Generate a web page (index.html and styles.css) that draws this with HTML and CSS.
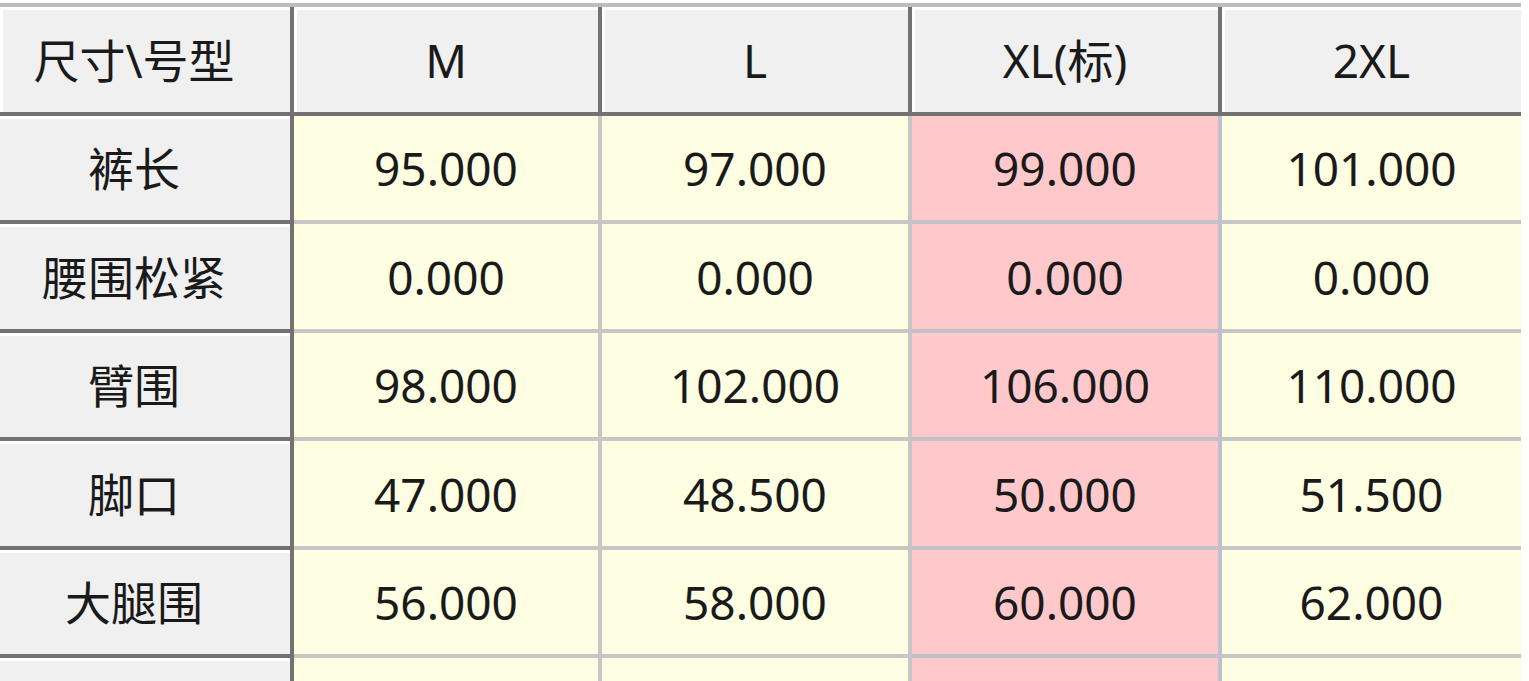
FILE: index.html
```html
<!DOCTYPE html>
<html lang="zh-CN">
<head>
<meta charset="utf-8">
<title>尺寸表</title>
<link rel="stylesheet" href="styles.css">
</head>
<body>
<div class="sheet">
  <table class="grid">
    <colgroup>
      <col class="c-head">
      <col class="c-m">
      <col class="c-l">
      <col class="c-xl">
      <col class="c-2xl">
    </colgroup>
    <thead>
      <tr class="hrow">
        <th class="corner">尺寸\号型</th>
        <th>M</th>
        <th>L</th>
        <th>XL(标)</th>
        <th class="last">2XL</th>
      </tr>
    </thead>
    <tbody>
      <tr class="r-a">
        <th class="rh">裤长</th>
        <td>95.000</td>
        <td>97.000</td>
        <td class="std">99.000</td>
        <td class="last">101.000</td>
      </tr>
      <tr class="r-b">
        <th class="rh">腰围松紧</th>
        <td>0.000</td>
        <td>0.000</td>
        <td class="std">0.000</td>
        <td class="last">0.000</td>
      </tr>
      <tr class="r-a">
        <th class="rh">臂围</th>
        <td>98.000</td>
        <td>102.000</td>
        <td class="std">106.000</td>
        <td class="last">110.000</td>
      </tr>
      <tr class="r-b">
        <th class="rh">脚口</th>
        <td>47.000</td>
        <td>48.500</td>
        <td class="std">50.000</td>
        <td class="last">51.500</td>
      </tr>
      <tr class="r-a">
        <th class="rh">大腿围</th>
        <td>56.000</td>
        <td>58.000</td>
        <td class="std">60.000</td>
        <td class="last">62.000</td>
      </tr>
      <tr class="r-tail">
        <th class="rh"></th>
        <td></td>
        <td></td>
        <td class="std"></td>
        <td class="last"></td>
      </tr>
    </tbody>
  </table>
</div>
</body>
</html>
```

FILE: styles.css
```css
html, body {
  margin: 0;
  padding: 0;
  background: #ffffff;
}

body {
  overflow: hidden;
  height: 681px;
}

.sheet {
  padding-top: 3px;
}

.grid {
  table-layout: fixed;
  border-collapse: separate;
  border-spacing: 0;
  width: 1521px;
  border-top: 4px solid #bdbdbd;
  font-family: "Noto Sans", "Noto Sans CJK SC", sans-serif;
  font-size: 46px;
  color: #1a1a1a;
}

.c-head { width: 294px; }
.c-m { width: 308px; }
.c-l { width: 310px; }
.c-xl { width: 310px; }
.c-2xl { width: 299px; }

th, td {
  padding: 0;
  text-align: center;
  vertical-align: middle;
  font-weight: normal;
  line-height: 1;
  white-space: nowrap;
  overflow: hidden;
}

.hrow th {
  height: 105px;
  background: #f0f0f0;
  border-right: 4px solid #727272;
  border-bottom: 4px solid #727272;
  box-shadow: inset 3px 3px 0 #ffffff;
}

.hrow th.last {
  border-right: 0;
}

.hrow th.corner {
  padding-right: 22px;
}

.r-a th, .r-a td { height: 104px; }
.r-b th, .r-b td { height: 105px; }

th.rh {
  background: #f0f0f0;
  border-right: 4px solid #727272;
  border-bottom: 4px solid #727272;
  box-shadow: inset 0 3px 0 #ffffff;
  padding-right: 22px;
}

td {
  background: #fefee2;
  border-right: 4px solid #c6c6c6;
  border-bottom: 4px solid #c6c6c6;
}

td.std {
  background: #ffc8ca;
  border-right-color: #c0c0cc;
  border-bottom-color: #c4c0c8;
}

td.last {
  border-right: 0;
}

.r-tail th, .r-tail td {
  height: 23px;
  border-bottom: 0;
}
```
